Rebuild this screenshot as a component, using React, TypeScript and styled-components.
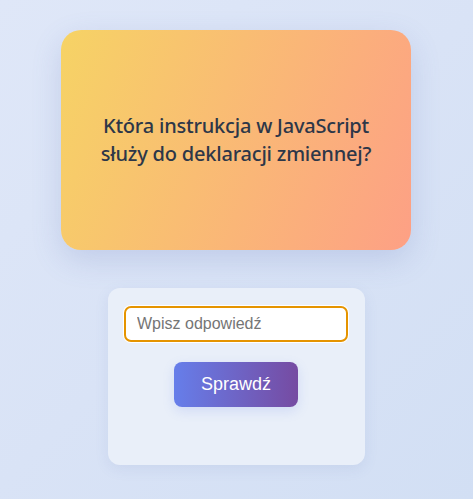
import React from "react";
import styled, { createGlobalStyle } from "styled-components";

const GlobalStyle = createGlobalStyle`
  html, body {
    margin: 0;
    padding: 0;
    height: 100%;
  }
  body {
    background: linear-gradient(135deg, #dfe7f8 0%, #d9e3f6 50%, #d2dff4 100%);
    font-family: "Noto Sans", "Open Sans", sans-serif;
  }
  #root {
    min-height: 100%;
  }
`;

const Page = styled.main`
  display: flex;
  flex-direction: column;
  align-items: center;
  padding: 30px 1px 0 0;
  gap: 38px;
  min-height: 499px;
  box-sizing: border-box;
`;

const QuestionCard = styled.section`
  width: 350px;
  height: 220px;
  box-sizing: border-box;
  border-radius: 20px;
  background: linear-gradient(110deg, #f6d365 0%, #fda085 100%);
  box-shadow: 0 10px 30px rgba(90, 110, 180, 0.2);
  display: flex;
  align-items: center;
  justify-content: center;
  padding: 0 30px;
`;

const QuestionText = styled.h2`
  margin: 0;
  font-family: "Noto Sans", "Open Sans", sans-serif;
  font-size: 20px;
  font-weight: 500;
  line-height: 28px;
  color: #2d3748;
  text-align: center;
  letter-spacing: -0.2px;
`;

const AnswerPanel = styled.section`
  width: 257px;
  height: 177px;
  box-sizing: border-box;
  border-radius: 12px;
  background: #e9eff9;
  box-shadow: 0 4px 14px rgba(90, 110, 180, 0.1);
  padding: 18px 16px 0 16px;
  display: flex;
  flex-direction: column;
  align-items: center;
  gap: 20px;
`;

const AnswerInput = styled.input`
  width: 224px;
  height: 36px;
  box-sizing: border-box;
  border: 2px solid #e59400;
  border-radius: 7px;
  box-shadow: 0 0 0 1px #ffffff;
  background: #ffffff;
  padding: 0 11px;
  font-family: "Liberation Sans", Arial, sans-serif;
  font-size: 16px;
  color: #333;
  outline: none;
  &::placeholder {
    color: #757575;
  }
`;

const CheckButton = styled.button`
  width: 124px;
  height: 45px;
  border: none;
  border-radius: 8px;
  background: linear-gradient(90deg, #667eea 0%, #764ba2 100%);
  box-shadow: 0 4px 12px rgba(102, 126, 234, 0.18);
  color: #ffffff;
  font-family: "Liberation Sans", Arial, sans-serif;
  font-size: 18px;
  cursor: pointer;
`;

export default function App() {
  return (
    <>
      <GlobalStyle />
      <Page>
        <QuestionCard>
          <QuestionText>
            Która instrukcja w JavaScript służy do deklaracji zmiennej?
          </QuestionText>
        </QuestionCard>
        <AnswerPanel>
          <AnswerInput type="text" placeholder="Wpisz odpowiedź" />
          <CheckButton type="button">Sprawdź</CheckButton>
        </AnswerPanel>
      </Page>
    </>
  );
}
